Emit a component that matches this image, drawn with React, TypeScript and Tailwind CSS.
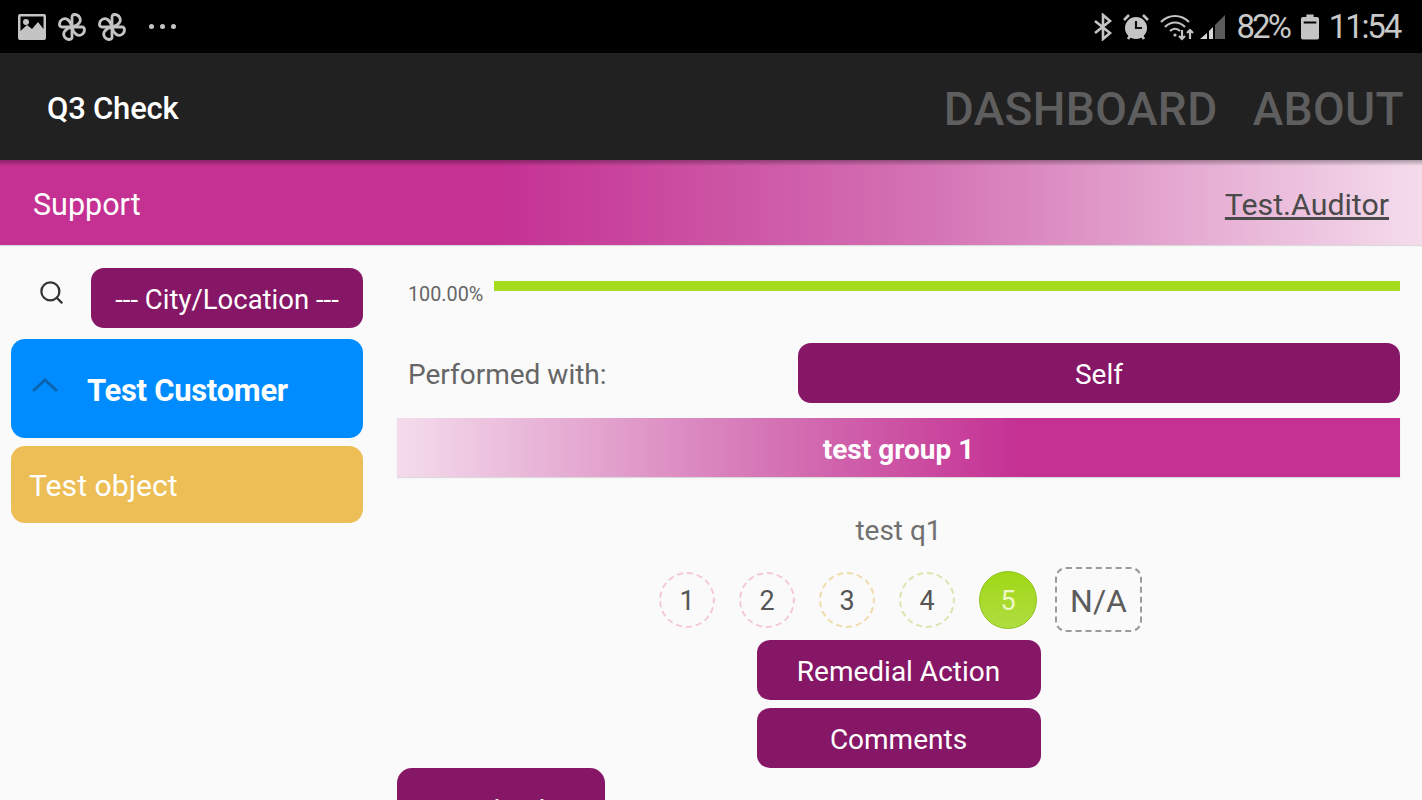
import { Search } from "lucide-react";

const font = { fontFamily: "Roboto, sans-serif" };

function Pinwheel() {
  const blade = "M15 15V5Q15 2.5 17.5 2.5C22.5 2.5 24.5 7.5 22.5 10.5C20.8 13 18 14.5 15 15Z";
  return (
    <svg width="30" height="30" viewBox="0 0 30 30" fill="none" stroke="#c4c4c4" strokeWidth="2.8">
      <path d={blade} />
      <path d={blade} transform="rotate(90 15 15)" />
      <path d={blade} transform="rotate(180 15 15)" />
      <path d={blade} transform="rotate(270 15 15)" />
    </svg>
  );
}

function StatusBar() {
  return (
    <div className="flex h-[53px] items-center justify-between bg-black pl-[18px] pr-[22px] text-[#c8c8c8]">
      <div className="flex items-center">
        <svg width="28" height="26" viewBox="0 0 28 26" fill="#c4c4c4">
          <path fillRule="evenodd" d="M2 0H26Q28 0 28 2V24Q28 26 26 26H2Q0 26 0 24V2Q0 0 2 0ZM2.5 2.5V17L9 11L14 15L20 8L25.5 15V2.5Z" />
          <circle cx="8" cy="8" r="3" />
        </svg>
        <div className="ml-[11px] flex gap-[10px]">
          <Pinwheel />
          <Pinwheel />
        </div>
        <div className="ml-[22px] flex gap-[6px]">
          <span className="h-[5px] w-[5px] rounded-full bg-[#c4c4c4]" />
          <span className="h-[5px] w-[5px] rounded-full bg-[#c4c4c4]" />
          <span className="h-[5px] w-[5px] rounded-full bg-[#c4c4c4]" />
        </div>
      </div>
      <div className="flex items-center">
        <svg width="20" height="28" viewBox="0 0 20 28" fill="none" stroke="#c4c4c4" strokeWidth="2.6">
          <path d="M2 8L17 20L10 26V2L17 8L2 20" />
        </svg>
        <svg className="ml-[9px]" width="28" height="28" viewBox="0 0 28 28">
          <circle cx="14" cy="15" r="11" fill="#c4c4c4" />
          <path d="M2 7L7 2M26 7L21 2M6 26L8 23M22 26L20 23" stroke="#c4c4c4" strokeWidth="2.6" />
          <path d="M14 8V15H20" stroke="#111" strokeWidth="2.2" fill="none" />
        </svg>
        <svg className="ml-[10px]" width="36" height="28" viewBox="0 0 36 28" fill="none" stroke="#c4c4c4" strokeWidth="2.2">
          <path d="M1 9C9 1 21 1 29 9" />
          <path d="M5 14C11 8 19 8 25 14" />
          <path d="M10 18C13 15 17 15 20 18" />
          <circle cx="15" cy="22" r="1.6" fill="#c4c4c4" stroke="none" />
          <path d="M22 17V26M19 23L22 26L25 23" />
          <path d="M30 26V17M27 20L30 17L33 20" />
        </svg>
        <svg className="ml-[4px]" width="25" height="28" viewBox="0 0 25 28">
          <path d="M0 26L7 20V26Z" fill="#d8d8d8" />
          <path d="M9 18L13 14V26H9Z" fill="#d8d8d8" />
          <path d="M15 12L25 2V26H15Z" fill="#5c5c5c" />
        </svg>
        <span className="ml-[12px] text-[33px] leading-none tracking-[-3px]" style={font}>
          82%
        </span>
        <svg className="ml-[12px]" width="18" height="28" viewBox="0 0 20 28">
          <path fillRule="evenodd" fill="#c4c4c4" d="M6 0H14V3H18Q20 3 20 5V26Q20 28 18 28H2Q0 28 0 26V5Q0 3 2 3H6ZM3 8V10H17V8Z" />
        </svg>
        <span className="ml-[10px] text-[33px] leading-none tracking-[-2.2px]" style={font}>
          11:54
        </span>
      </div>
    </div>
  );
}

function AppBar() {
  return (
    <div className="flex h-[107px] items-center justify-between bg-[#212121] pl-[47px] pr-[18px] pt-[6px]">
      <span className="text-[31px] font-medium tracking-[-0.2px] text-white">Q3 Check</span>
      <div className="flex gap-[35px] text-[46px] font-medium tracking-[0.4px] text-[#5e5e5e]">
        <span>DASHBOARD</span>
        <span>ABOUT</span>
      </div>
    </div>
  );
}

function HeaderBand() {
  return (
    <div className="flex h-[85px] items-center justify-between bg-[linear-gradient(to_bottom,rgba(0,0,0,0.3),rgba(0,0,0,0)_6px),linear-gradient(to_right,#c43193_0%,#c43193_35%,#d472b4_65%,#f4dcec_100%)] pl-[33px] pr-[33px] pt-[4px] shadow-[0_1px_1px_rgba(0,0,0,0.12)]">
      <span className="text-[30.5px] text-white">Support</span>
      <span className="text-[30.3px] text-[#4a4a4a] underline underline-offset-2">Test.Auditor</span>
    </div>
  );
}

function Sidebar() {
  return (
    <div className="flex w-[352px] shrink-0 flex-col">
      <div className="flex items-start justify-between">
        <Search className="ml-[27px] mt-[11px] h-[27px] w-[27px] text-[#333]" strokeWidth={2} />
        <div className="flex h-[60px] w-[272px] items-center justify-center rounded-[13px] bg-[#861666] pt-[4px] text-[27.5px] text-white">
          --- City/Location ---
        </div>
      </div>
      <div className="mt-[11px] flex h-[99px] items-center rounded-[14px] bg-[#008cff] pl-[19px] pt-[6px]">
        <svg className="mb-[14px]" width="30" height="18" viewBox="0 0 30 18" fill="none" stroke="#0b62ad" strokeWidth="3">
          <path d="M3 15L15 4L27 15" />
        </svg>
        <span className="ml-[27px] text-[31px] font-bold tracking-[-0.3px] text-white">Test Customer</span>
      </div>
      <div className="mt-[8px] flex h-[77px] items-center rounded-[14px] bg-[#ecbe55] pl-[18px] pt-[2px] text-[30.2px] text-white">
        Test object
      </div>
    </div>
  );
}

function Rating({ n, color }: { n: number; color: string }) {
  return (
    <div
      className="flex h-[56px] w-[56px] items-center justify-center rounded-full border-2 border-dashed pt-[4px] text-[27px] text-[#555]"
      style={{ borderColor: color }}
    >
      {n}
    </div>
  );
}

function ActionButton({ label }: { label: string }) {
  return (
    <div className="flex h-[60px] w-[284px] items-center justify-center rounded-[13px] bg-[#861666] pt-[4px] text-[28px] text-white">
      {label}
    </div>
  );
}

function QuestionPanel() {
  return (
    <div className="ml-[34px] flex w-[1003px] flex-col">
      <div className="flex items-start pl-[11px]">
        <span className="mt-[15px] w-[86px] text-[19.8px] leading-[24px] text-[#666]">100.00%</span>
        <div className="mt-[13px] h-[10px] flex-1 bg-[#a5dc1e]" />
      </div>
      <div className="mt-[36px] flex items-center pl-[11px]">
        <span className="w-[390px] pt-[4px] text-[28px] text-[#666]">Performed with:</span>
        <div className="flex h-[60px] flex-1 items-center justify-center rounded-[13px] bg-[#861666] pt-[4px] text-[28px] text-white">
          Self
        </div>
      </div>
      <div className="mt-[15px] flex h-[59px] items-center justify-center bg-[linear-gradient(to_right,#f4dcec_0%,#d472b4_38%,#c43193_62%,#c43193_100%)] pt-[4px] text-[28px] font-bold text-white shadow-[0_1px_1px_rgba(0,0,0,0.12)]">
        test group 1
      </div>
      <div className="mt-[36px] text-center text-[28px] leading-[36px] text-[#707070]">test q1</div>
      <div className="mt-[18px] flex items-center pl-[262px]">
        <div className="flex items-center gap-[24px]">
          <Rating n={1} color="#f3c9d2" />
          <Rating n={2} color="#f3c9d2" />
          <Rating n={3} color="#eedcaa" />
          <Rating n={4} color="#d9e5ae" />
          <div className="flex h-[58px] w-[58px] items-center justify-center rounded-full border border-[#8ec21c] bg-[linear-gradient(to_bottom,#a0d816,#b0dd40)] pt-[4px] text-[27px] text-[#eef9c8]">
            5
          </div>
        </div>
        <div className="ml-[18px] flex h-[65px] w-[87px] items-center justify-center rounded-[11px] border-2 border-dashed border-[#9a9a9a] pt-[2px] text-[32px] text-[#5c5c5c]">
          N/A
        </div>
      </div>
      <div className="mt-[8px] flex flex-col items-center gap-[8px]">
        <ActionButton label="Remedial Action" />
        <ActionButton label="Comments" />
      </div>
      <div className="flex h-[60px] w-[208px] items-center justify-center rounded-[15px] bg-[#861666] pt-[25px] text-[28px] text-white">
        Attach Files
      </div>
    </div>
  );
}

export default function App() {
  return (
    <div className="h-[800px] w-[1422px] overflow-hidden bg-[#fafafa]" style={font}>
      <StatusBar />
      <AppBar />
      <HeaderBand />
      <div className="flex pl-[11px] pt-[23px]">
        <Sidebar />
        <QuestionPanel />
      </div>
    </div>
  );
}
